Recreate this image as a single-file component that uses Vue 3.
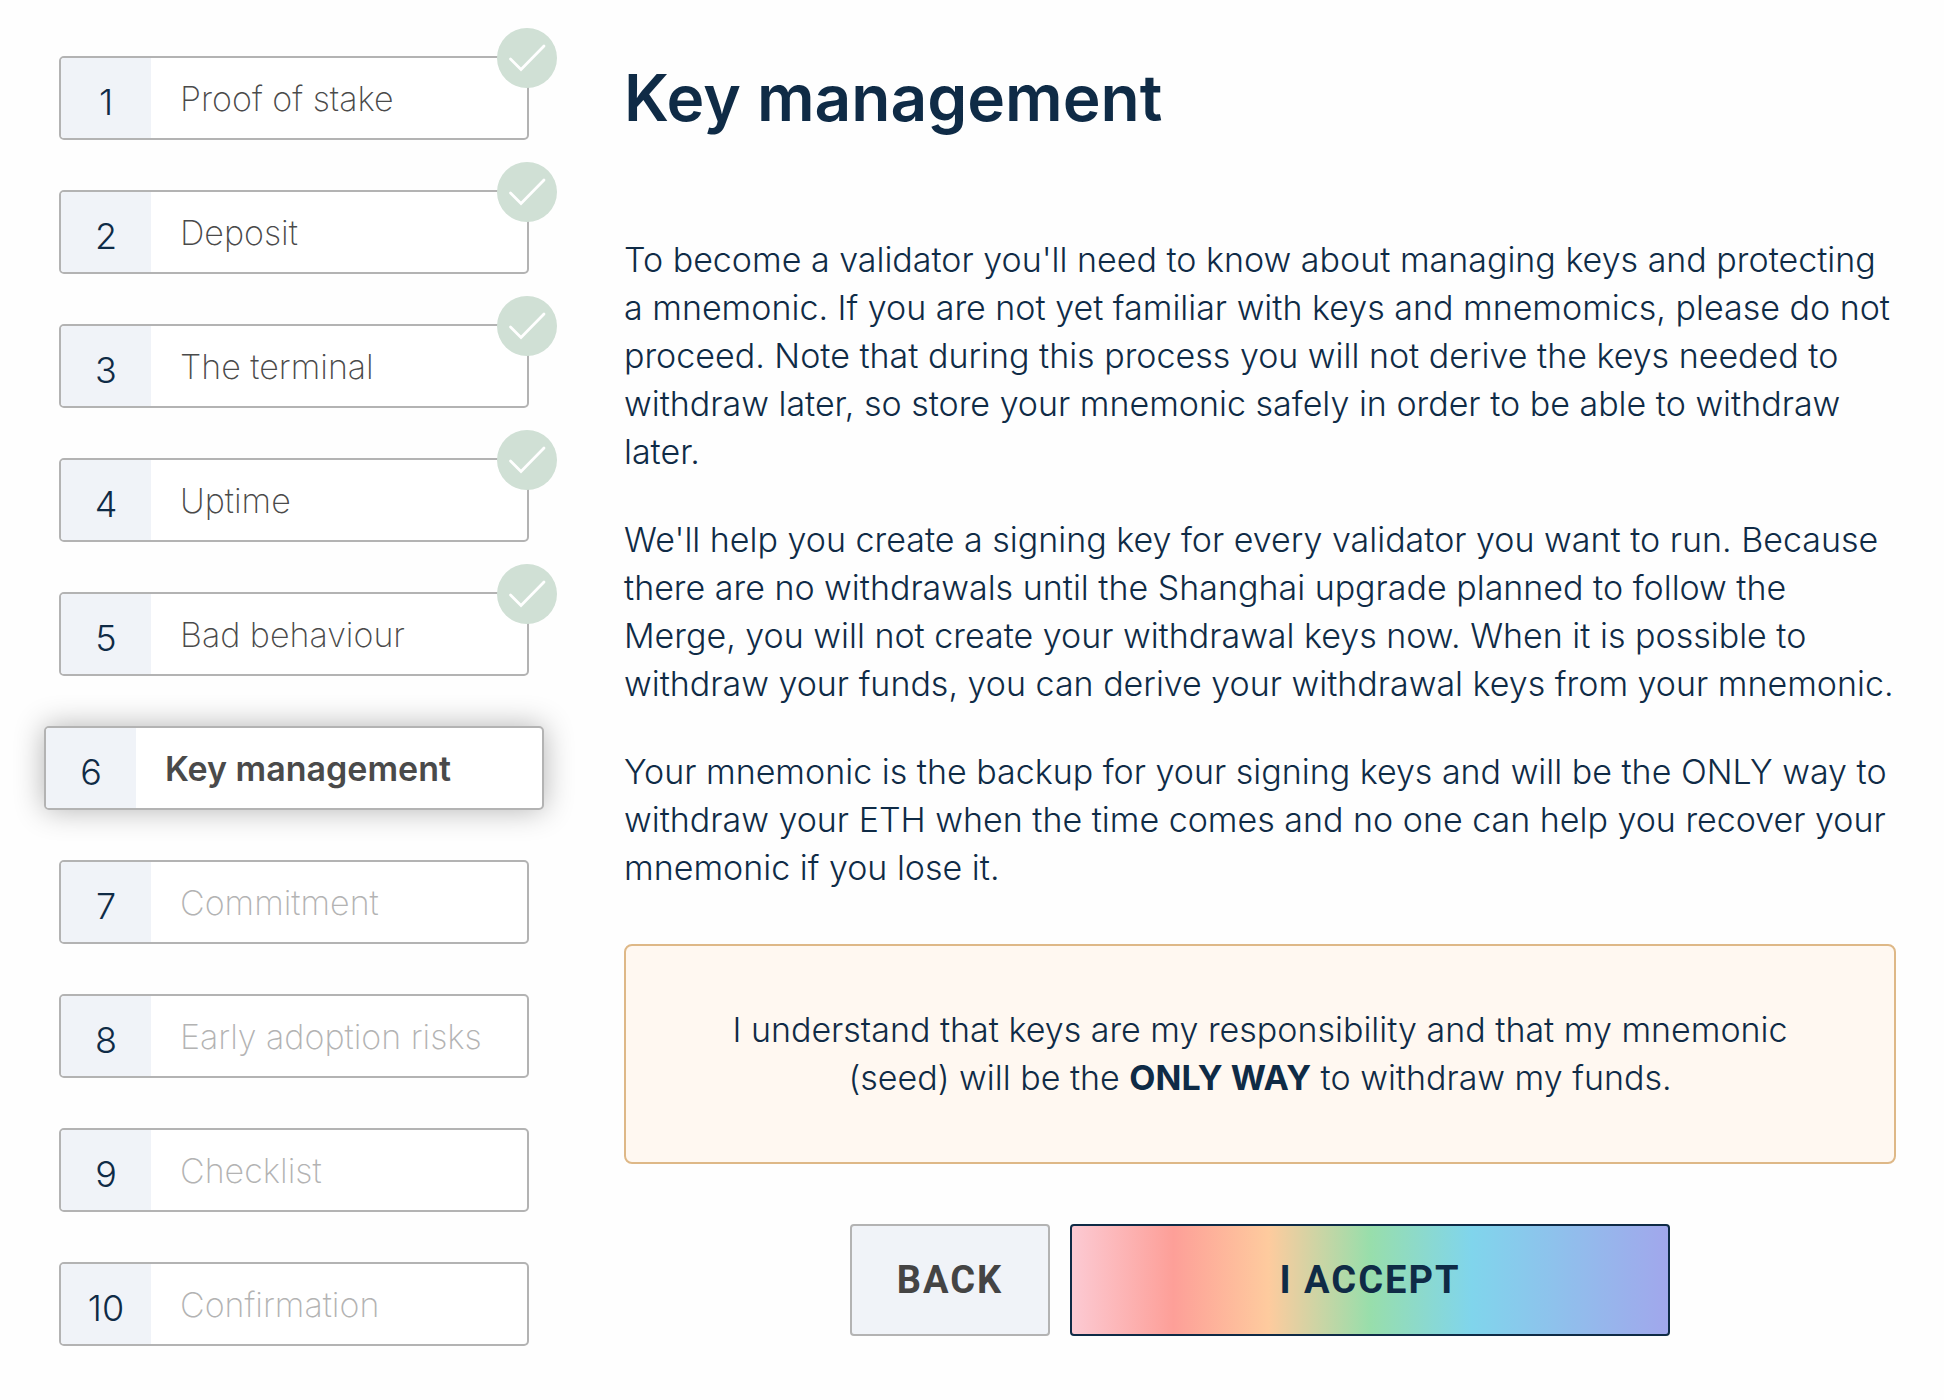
<script setup>
const current = 6
const steps = [
  'Proof of stake',
  'Deposit',
  'The terminal',
  'Uptime',
  'Bad behaviour',
  'Key management',
  'Commitment',
  'Early adoption risks',
  'Checklist',
  'Confirmation',
].map((title, i) => {
  const number = i + 1
  const state = number < current ? 'done' : number === current ? 'active' : 'upcoming'
  return { number, title, state }
})
</script>

<template>
  <div class="page">
    <nav aria-label="Progress">
      <ol class="steps">
        <li
          v-for="step in steps"
          :key="step.number"
          class="step"
          :class="step.state"
          :aria-current="step.state === 'active' ? 'step' : undefined"
        >
          <span class="number">{{ step.number }}</span>
          <span class="title">{{ step.title }}</span>
          <svg v-if="step.state === 'done'" class="badge" viewBox="0 0 60 60" role="img" aria-label="Completed">
            <circle cx="30" cy="30" r="30" fill="#d0e0d5" />
            <path d="M13.5 31 L24 41.5 L47 18" fill="none" stroke="#fff" stroke-width="2.8" stroke-linecap="round" />
          </svg>
        </li>
      </ol>
    </nav>

    <main class="content">
      <h1>Key management</h1>
      <p>
        To become a validator you'll need to know about managing keys and protecting a mnemonic. If you are
        not yet familiar with keys and mnemomics, please do not proceed. Note that during this process you
        will not derive the keys needed to withdraw later, so store your mnemonic safely in order to be able
        to withdraw later.
      </p>
      <p>
        We'll help you create a signing key for every validator you want to run. Because there are no
        withdrawals until the Shanghai upgrade planned to follow the Merge, you will not create your
        withdrawal keys now. When it is possible to withdraw your funds, you can derive your withdrawal keys
        from your mnemonic.
      </p>
      <p>
        Your mnemonic is the backup for your signing keys and will be the ONLY way to withdraw your ETH when
        the time comes and no one can help you recover your mnemonic if you lose it.
      </p>
      <div class="notice">
        I understand that keys are my responsibility and that my mnemonic (seed) will be the
        <strong>ONLY WAY</strong> to withdraw my funds.
      </div>
      <div class="actions">
        <button type="button" class="back">BACK</button>
        <button type="button" class="accept">I ACCEPT</button>
      </div>
    </main>
  </div>
</template>

<style>
body {
  background: #fefefe;
}
</style>

<style scoped>
.page {
  display: grid;
  grid-template-columns: 470px minmax(0, 1fr);
  column-gap: 95px;
  padding: 56px 48px 56px 59px;
  color: #0f2b46;
  font-family: Inter, "Liberation Sans", sans-serif;
  font-size: 34px;
  font-weight: 300;
  line-height: 48px;
}

.steps {
  display: flex;
  flex-direction: column;
  gap: 50px;
  margin: 0;
  padding: 0;
  list-style: none;
}

.step {
  position: relative;
  display: flex;
  box-sizing: border-box;
  height: 84px;
  border: 2px solid #b3b3b3;
  border-radius: 5px;
  background: #fff;
}

.number {
  flex: none;
  box-sizing: border-box;
  width: 90px;
  padding-top: 20px;
  border-radius: 3px 0 0 3px;
  background: #f0f3f8;
  font-size: 36px;
  text-align: center;
}

.title {
  padding: 17px 0 0 29px;
  color: #4a4a4a;
  font-weight: 200;
  white-space: nowrap;
}

.active {
  margin: 0 -15px;
  box-shadow: 0 0 30px rgba(0, 0, 0, 0.3);
}

.active .title {
  font-weight: 600;
}

.upcoming .title {
  color: #b3b3b3;
}

.badge {
  position: absolute;
  top: -30px;
  right: -30px;
  width: 60px;
  height: 60px;
}

h1 {
  margin: 0 0 96px;
  font-size: 64px;
  font-weight: 600;
  line-height: 84px;
}

p {
  margin: 0 0 40px;
}

.notice {
  margin-top: 52px;
  padding: 60px;
  border: 2px solid #deb887;
  border-radius: 8px;
  background: #fff8f1;
  text-align: center;
}

.notice strong {
  font-weight: 700;
}

.actions {
  display: flex;
  justify-content: center;
  gap: 20px;
  margin-top: 60px;
}

button {
  height: 112px;
  padding: 0;
  border: 2px solid #b3b3b3;
  border-radius: 4px;
  background: #f0f3f8;
  color: #444;
  font: 700 38px/48px Roboto, "Liberation Sans", sans-serif;
  letter-spacing: 2px;
}

.back {
  width: 200px;
}

.accept {
  width: 600px;
  border-color: #0f2b46;
  background: linear-gradient(90deg, #fccad3, #fd9f98 17%, #fecb9e 33%, #98deab 50%, #80d5ec 67%, #a1a7ec);
  color: #0f2b46;
}
</style>
